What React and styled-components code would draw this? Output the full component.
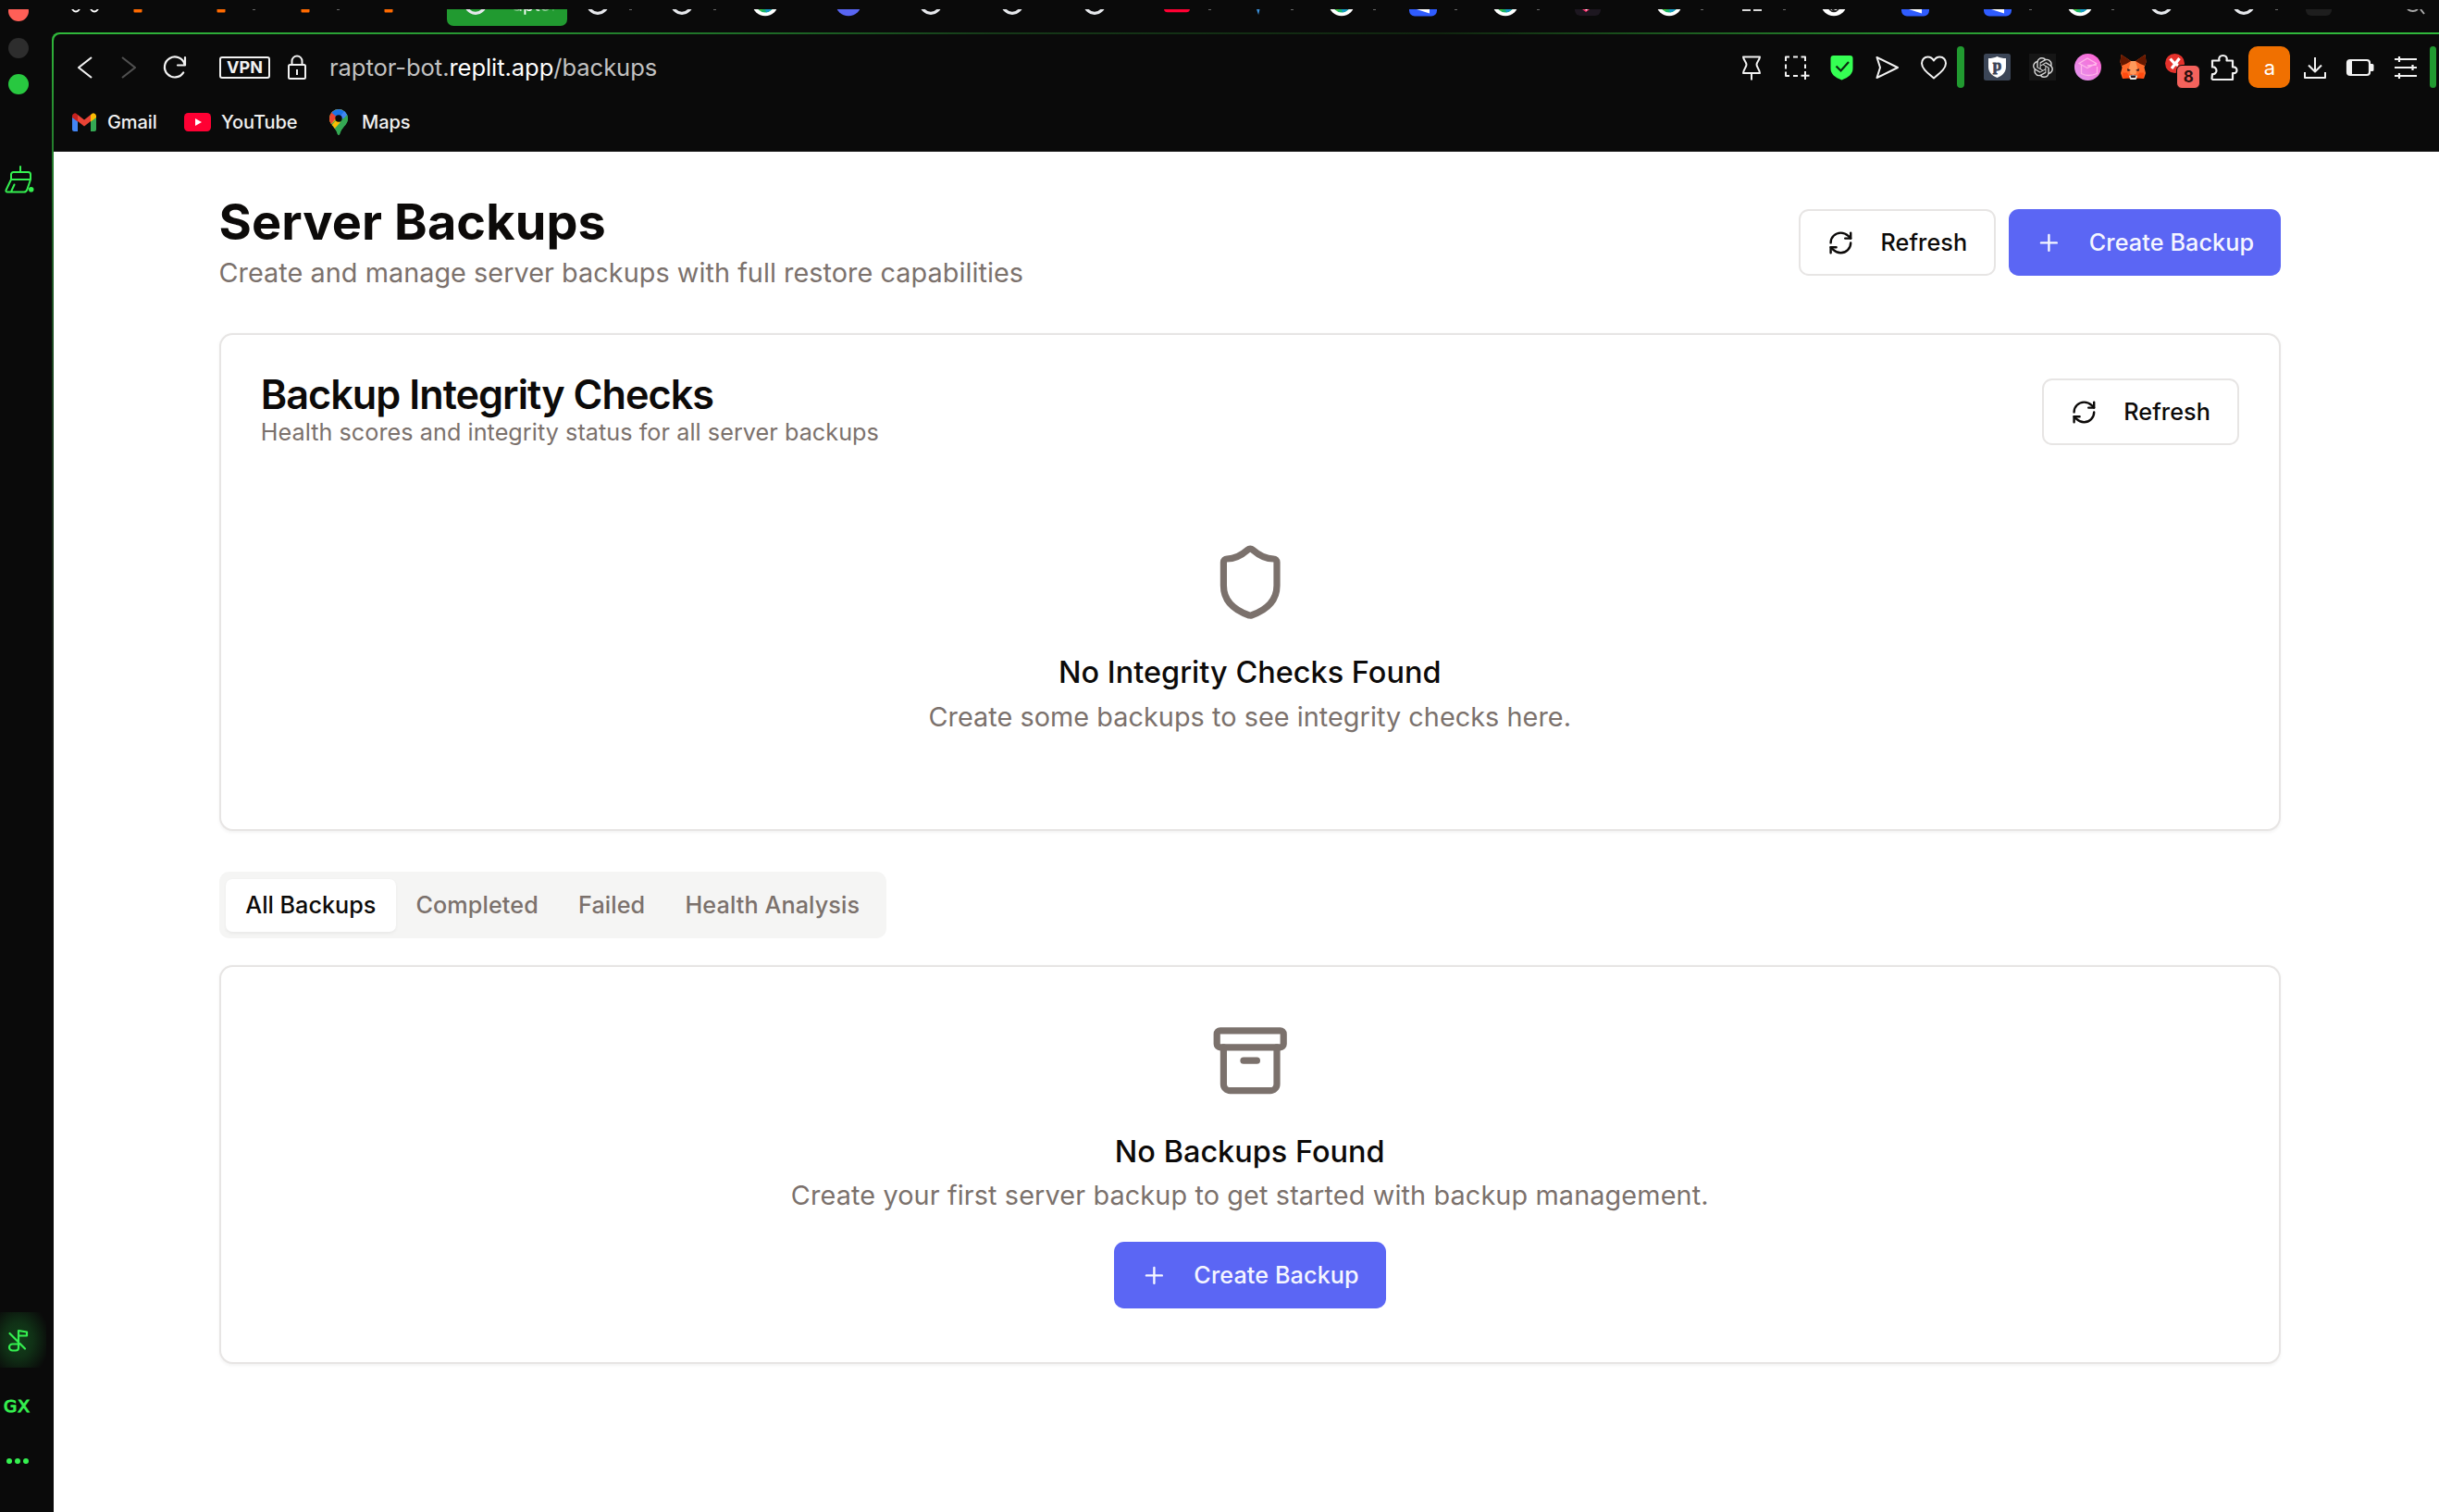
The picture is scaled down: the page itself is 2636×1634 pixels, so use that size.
import React from "react";
import styled, { createGlobalStyle, css } from "styled-components";
import { RefreshCw, Plus, Shield, Archive } from "lucide-react";
import { SiOpenai } from "react-icons/si";

const GlobalStyle = createGlobalStyle`
  *, *::before, *::after { box-sizing: border-box; }
  html, body { margin: 0; padding: 0; background: #0a0a0a; }
  body { font-family: Inter, "Liberation Sans", sans-serif; overflow: hidden; }
  svg { display: block; flex: none; }
  h1, h2, h3, p { margin: 0; }
  button { font: inherit; border: 0; margin: 0; cursor: pointer; }
`;

const Window = styled.div`
  display: flex;
  width: 2636px;
  height: 1634px;
  background: #0a0a0a;
  overflow: hidden;
`;

/* ---------- left rail ---------- */
const Rail = styled.aside`
  width: 56px;
  flex: none;
  display: flex;
  flex-direction: column;
  padding-top: 10px;
`;
const TrafficLights = styled.div`
  display: flex;
  flex-direction: column;
  gap: 17.6px;
  height: 93px;
  padding-left: 9px;
  overflow: hidden;
`;
const Light = styled.span`
  width: 22px;
  height: 22px;
  flex: none;
  border-radius: 50%;
  background: ${(p) => p.$color};
  margin-top: ${(p) => (p.$first ? "-9px" : "0")};
`;
const RailTop = styled.div`
  padding: 76px 0 0 5px;
  flex: 1;
`;
const RailTile = styled.div`
  width: 50px;
  height: 60px;
  padding: 18px 0 0 8px;
  background: radial-gradient(ellipse 34px 42px at 20px 30px, #12401a 0%, #103116 45%, #0a0a0a 100%);
`;
const GxLabel = styled.div`
  margin-top: 31px;
  padding-left: 4px;
  height: 21px;
  font: 400 18.5px/21px "DejaVu Sans", sans-serif;
  letter-spacing: 1px;
  -webkit-text-stroke: 1.1px #35f050;
  color: #35f050;
`;
const Dots = styled.div`
  display: flex;
  gap: 3px;
  padding: 46px 0 52px 7px;
  span {
    width: 6px;
    height: 6px;
    border-radius: 50%;
    background: #35f050;
  }
`;

/* ---------- browser frame ---------- */
const Main = styled.div`
  flex: 1;
  display: flex;
  flex-direction: column;
  min-width: 0;
`;
const TabStrip = styled.div`
  display: flex;
  height: 35px;
  padding: 10px 0 0 21px;
  flex: none;
`;
const TabCell = styled.div`
  width: ${(p) => p.$w}px;
  flex: none;
  display: flex;
  align-items: flex-start;
`;
const ActiveTab = styled.div`
  width: 130px;
  height: 18px;
  margin-right: 18px;
  padding-left: 16px;
  flex: none;
  display: flex;
  gap: 12px;
  overflow: hidden;
  border-radius: 0 0 7px 7px;
  background: #219a30;
`;
const TabText = styled.span`
  font-size: 20px;
  line-height: 20px;
  margin-top: -15px;
  height: 21px;
  color: #fff;
  -webkit-mask-image: linear-gradient(90deg, transparent 12px, #000 26px, #000 55%, transparent);
`;
const Frame = styled.div`
  flex: 1;
  display: flex;
  flex-direction: column;
  border-radius: 8px 0 0 0;
  padding: 2px 0 0 2px;
  background:
    linear-gradient(90deg, #30b93b 0, #289a33 420px, #1d6926 780px, #153818 1020px, #10240f 1500px, rgba(10, 10, 10, 0) 2200px) top / 100% 2px no-repeat,
    linear-gradient(180deg, #30b93b 0, #26872f 100px, #1c5c24 220px, #1a3a1e 420px, #161a16 700px, #0a0a0a 1000px);
`;
const Chrome = styled.div`
  height: 127px;
  flex: none;
  background: #0a0a0a;
  border-radius: 7px 0 0 0;
  border-bottom: 1px solid #1c1c1c;
`;
const AddressRow = styled.div`
  height: 71px;
  display: flex;
  align-items: center;
`;
const NavButtons = styled.div`
  display: flex;
  align-items: center;
  gap: 23px;
  padding-left: 21px;
`;
const Vpn = styled.span`
  width: 55px;
  height: 24px;
  margin: 0 18px 0 34px;
  display: flex;
  align-items: center;
  justify-content: center;
  border: 2px solid #f2f2f2;
  border-radius: 3px;
  color: #f2f2f2;
  font-size: 18px;
  font-weight: 700;
`;
const Url = styled.span`
  margin-left: 24px;
  font-size: 25.6px;
  letter-spacing: -0.08px;
  line-height: 32px;
  padding-top: 1px;
  color: #c2c2c2;
  white-space: nowrap;
  b { font-weight: 400; color: #fff; }
`;
const ToolIcons = styled.div`
  display: flex;
  align-items: center;
  margin-left: ${(p) => p.$ml || "0"};
  margin-right: ${(p) => p.$mr || "0"};
`;
const Slot = styled.span`
  width: 49.05px;
  height: 45px;
  display: flex;
  align-items: center;
  justify-content: center;
`;
const GreenBar = styled.span`
  width: 7.5px;
  height: 45px;
  border-radius: 4px;
  background: #219a30;
  flex: none;
  margin-right: ${(p) => (p.$edge ? "3px" : "0")};
`;
const Avatar = styled.span`
  width: 45px;
  height: 45px;
  border-radius: 10px;
  background: #f07000;
  color: #fff;
  display: flex;
  align-items: center;
  justify-content: center;
  font-size: 22px;
`;
const BadgeHost = styled.span`
  position: relative;
  width: 29px;
  height: 29px;
`;
const Badge = styled.span`
  position: absolute;
  left: 12px;
  top: 12px;
  width: 26px;
  height: 26px;
  border: 0.5px solid #0a0a0a;
  border-radius: 6px;
  background: #f4625c;
  color: #2a0f0e;
  font-size: 17px;
  font-weight: 700;
  line-height: 25px;
  text-align: center;
`;
const Bookmarks = styled.div`
  display: flex;
  align-items: center;
  height: 47px;
  padding-left: 20px;
`;
const Bookmark = styled.span`
  display: flex;
  align-items: center;
  gap: ${(p) => p.$gap}px;
  width: ${(p) => p.$w}px;
  font-size: 20px;
  letter-spacing: -0.1px;
  line-height: 26px;
  font-weight: 500;
  color: #f0f0f0;
`;

/* ---------- page ---------- */
const Page = styled.main`
  flex: 1;
  background: #fff;
  padding: 44px 171px 0 178.5px;
  color: #0c0a09;
`;
const PageHeader = styled.header`
  display: flex;
  justify-content: space-between;
  align-items: center;
  margin-bottom: 43.8px;
`;
const Title = styled.h1`
  font-size: 54px;
  line-height: 64.8px;
  font-weight: 700;
  letter-spacing: 0.12px;
`;
const Muted = styled.p`
  font-size: ${(p) => (p.$small ? "25.2px" : "28.8px")};
  line-height: ${(p) => (p.$small ? "36px" : "43.2px")};
  letter-spacing: ${(p) => p.$ls || "0.05px"};
  color: #7b716c;
  white-space: nowrap;
`;
const Actions = styled.div`
  display: flex;
  gap: 14.4px;
`;
const Button = styled.button`
  display: inline-flex;
  align-items: center;
  gap: 28.8px;
  height: 72px;
  padding: 0 28.8px;
  border-radius: 10.8px;
  font-size: 25.2px;
  letter-spacing: 0.1px;
  font-weight: 500;
  white-space: nowrap;
  ${(p) =>
    p.$primary
      ? css`
          background: #5b66f4;
          color: #f5f6ff;
        `
      : css`
          background: #fff;
          color: #0c0a09;
          border: 2px solid #e7e5e4;
        `}
`;
const Card = styled.section`
  border: 2px solid #e7e5e4;
  border-radius: 14.4px;
  background: #fff;
  box-shadow: 0 1.8px 3.6px rgba(0, 0, 0, 0.05);
  padding: ${(p) => p.$pad};
  margin-top: ${(p) => p.$mt || 0};
  height: ${(p) => p.$h};
`;
const CardHeader = styled.div`
  display: flex;
  justify-content: space-between;
  align-items: center;
`;
const CardTitle = styled.h2`
  font-size: 43.2px;
  line-height: 43.2px;
  font-weight: 600;
  letter-spacing: -0.97px;
`;
const Empty = styled.div`
  display: flex;
  flex-direction: column;
  align-items: center;
  padding-top: ${(p) => p.$top};
  > svg { margin-bottom: 29.8px; color: #7b716c; }
  > button { margin-top: 28.8px; }
`;
const EmptyTitle = styled.h3`
  font-size: 32.4px;
  line-height: 50.4px;
  font-weight: 500;
  letter-spacing: 0.04px;
`;
const TabList = styled.div`
  display: inline-flex;
  height: 72px;
  padding: 7.2px;
  margin-top: 44px;
  border-radius: 10.8px;
  background: #f5f5f4;
  vertical-align: top;
`;
const TabTrigger = styled.button`
  padding: 0 21.6px;
  height: 57.6px;
  border-radius: 7.2px;
  font-size: 25.2px;
  font-weight: 500;
  letter-spacing: ${(p) => (p.$active ? "0" : "0.1px")};
  white-space: nowrap;
  background: ${(p) => (p.$active ? "#fff" : "transparent")};
  color: ${(p) => (p.$active ? "#0c0a09" : "#7b716c")};
  box-shadow: ${(p) => (p.$active ? "0 1.8px 3.6px rgba(0,0,0,.05)" : "none")};
`;

/* ---------- favicons (only their lower edge is visible) ---------- */
const Favicon = ({ kind }) => {
  const art = {
    hooks: (
      <g fill="none" stroke="#fff" strokeWidth="2">
        <path d="M0 0q4 5 8 0M20 0q4 5 8 0" />
      </g>
    ),
    orange: <rect x="9.5" y="-4" width="9" height="7.5" rx="1" fill="#ff6a00" />,
    ring: <circle cx="14" cy="-6.3" r="10.6" fill="none" stroke="#e6e8ec" strokeWidth="3.2" />,
    globe: (
      <g>
        <circle cx="14" cy="-6.7" r="14" fill="#fff" />
        <circle cx="14" cy="-6.7" r="10.2" fill="#19b56a" />
        <path d="M14 0h7l-2 2-4 1.4z" fill="#1597c9" />
        <path d="M7 0h4l-1 2z" fill="#4cc22e" />
      </g>
    ),
    indigo: <circle cx="14" cy="-6.7" r="14" fill="#5865f2" />,
    red: <rect x="0" y="-10" width="28" height="13.3" rx="4" fill="#ff0033" />,
    sliver: <path d="M11 0h3.5l-1.4 6z" fill="#3b8fd8" />,
    blue: (
      <g>
        <rect x="-1" y="-20" width="30" height="27.5" rx="6" fill="#2f5cff" />
        <path d="M7 0h14v4.5z" fill="#fff" />
      </g>
    ),
    pink: (
      <g>
        <rect x="0" y="-20" width="28" height="27" rx="6" fill="#1d1720" />
        <path d="M8 0h8l-4 3z" fill="#ff2d6b" />
        <path d="M11 0h3l-1.5 1.5z" fill="#fff" />
      </g>
    ),
    dashes: <path d="M4 1h9M16 1h9" stroke="#d8d8d8" strokeWidth="2" />,
    disc: (
      <g>
        <circle cx="14" cy="-6.7" r="14" fill="#fff" />
        <path d="M9 0q5 5 10 0M12 0l4 2" fill="none" stroke="#222" strokeWidth="1.6" />
      </g>
    ),
    dark: <rect x="0" y="-20" width="28" height="27" rx="6" fill="#1e1e1e" />,
    search: <path d="M6 0q6 4 11 0M20 0l4 5" fill="none" stroke="#a8a8a8" strokeWidth="2" />,
  };
  return (
    <svg width="30" height="9" viewBox="-1 0 30 9">
      {art[kind]}
    </svg>
  );
};

const TabDot = styled.span`
  width: 3px;
  height: 1px;
  margin-left: 19px;
  background: #6a6a6a;
`;

/* [icon, cell width, shows the first pixels of its label] */
const leftTabs = [
  ["hooks", 56.5],
  ["orange", 90.5],
  ["orange", 90.5, true],
  ["orange", 90.5, true],
  ["orange", 78],
];
const rightTabs = [
  ["ring", 90.5, true], ["ring", 90.5, true], ["globe", 90], ["indigo", 88.5], ["ring", 88.9],
  ["ring", 88.9], ["ring", 88.9], ["red", 88.7, true], ["sliver", 88.7, true], ["globe", 88.7, true],
  ["blue", 88.7, true], ["globe", 88.7, true], ["pink", 88.7], ["globe", 88.7, true], ["dashes", 88.7, true],
  ["disc", 88.7], ["blue", 88.7], ["blue", 88.7, true], ["globe", 88.7, true], ["ring", 88.7],
  ["ring", 81, true], ["dark", 104], ["search", 30],
];

const line = { fill: "none", stroke: "#f2f2f2", strokeWidth: 2, strokeLinejoin: "round" };

const Back = () => (
  <svg width="25" height="28" viewBox="0 0 25 28" {...line} strokeWidth="2.2"><path d="M20 3 6 14l14 11" /></svg>
);
const Forward = () => (
  <svg width="25" height="28" viewBox="0 0 25 28" {...line} stroke="#505050" strokeWidth="2.2"><path d="M5 3l14 11L5 25" /></svg>
);
const Reload = () => (
  <svg width="28" height="28" viewBox="0 0 28 28" {...line} strokeWidth="2.2" strokeLinecap="round">
    <path d="M23.2 19.4A11 11 0 1 1 24.5 10.500M25 3v8.500h-8" />
  </svg>
);
const Lock = () => (
  <svg width="22" height="28" viewBox="0 0 22 28" {...line}>
    <rect x="2" y="11" width="18" height="15" rx="1.500" /><path d="M5.500 11V7a5.500 5.500 0 0 1 11 0v4M11 16v6" />
  </svg>
);
const Pin = () => (
  <svg width="28" height="28" viewBox="0 0 28 28" {...line}>
    <path d="M5 2.500h18c-.2 3-3.500 5.500-3.500 8.300S22.800 16 23 20H5c.2-4 3.500-6.400 3.500-9.200S5.200 5.500 5 2.500zM14 20v7.500" />
  </svg>
);
const Capture = () => (
  <svg width="28" height="28" viewBox="0 0 28 28" {...line}>
    <path d="M2 7V2.500h4M10 2.500h5M18.500 2.500H23V7M2 10.500v5M2 18.500V23h4M10 23h5M23 10.500V15M23 18v9M18.500 22.700h9" />
  </svg>
);
const GreenShield = () => (
  <svg width="28" height="28" viewBox="0 0 28 28">
    <path d="M4.500 1h18a3 3 0 0 1 3 3v11c0 6-4.500 9.500-12 12.500C6 24.500 1.500 21 1.500 15V4a3 3 0 0 1 3-3z" fill="#35ff53" />
    <path d="M7.500 12.500l5 5 8.500-9.500" fill="none" stroke="#0a2a10" strokeWidth="2.200" />
  </svg>
);
const Send = () => (
  <svg width="28" height="28" viewBox="0 0 28 28" {...line}><path d="M2.500 3 25 14 2.500 25 6 14z" /></svg>
);
const Heart = () => (
  <svg width="30" height="28" viewBox="0 0 30 28" {...line}>
    <path d="M15 25.500C8 19.500 2 15 2 9.500 2 5.500 4.700 2.500 8.500 2.500c3 0 5 1.500 6.500 4 1.500-2.500 3.500-4 6.500-4 3.800 0 6.500 3 6.500 7 0 5.500-6 10-13 16z" />
  </svg>
);
const PIcon = () => (
  <svg width="29" height="29" viewBox="0 0 29 29">
    <rect width="29" height="29" rx="2.500" fill="#3b4556" />
    <path d="M14.500 3c3 1.600 6 2 9.500 2v9c0 6-3.500 9.500-9.500 12C8.500 23.500 5 20 5 14V5c3.500 0 6.500-.4 9.500-2z" fill="#fff" />
    <text x="14.500" y="17.500" textAnchor="middle" fontFamily="Liberation Serif, serif" fontWeight="700" fontSize="17" fill="#3b4556" stroke="#3b4556" strokeWidth=".8">p</text>
  </svg>
);
const GptTile = styled.span`
  width: 29px;
  height: 29px;
  display: flex;
  align-items: center;
  justify-content: center;
  background: #161616;
  color: #d4d4d4;
`;
const Grad = () => (
  <svg width="29" height="29" viewBox="0 0 29 29">
    <defs><linearGradient id="gradFill" x1="1" y1="0" x2="0" y2="1"><stop offset="0" stopColor="#ff5fd0" /><stop offset="1" stopColor="#e09af0" /></linearGradient></defs>
    <circle cx="14.500" cy="14.500" r="14.500" fill="url(#gradFill)" />
    <path d="M5 10.500 14 5l9.500 5.500L14 15.500zM14 13l10-1M7.500 12.500v9q7 4 17 0v-7.500" fill="none" stroke="#ffb5ea" strokeWidth="1.300" />
  </svg>
);
const Fox = () => (
  <svg width="29" height="29" viewBox="0 0 29 29">
    <path d="M1.500 1 12 8h5L27.500 1l1 8-2 6 1.500 6-2 6-5.500-1.500-3 2h-6l-3-2L3 27l-2-6 1.500-6-2-6z" fill="#ff6a2a" />
    <path d="M1.500 1 12 8l-5 3-5 2-1.500-4zM27.500 1 17 8l5 3 5 2 1.500-4z" fill="#641800" />
    <path d="M12 8h5l2 7-1.500 7h-6L10 15z" fill="#ff9a5c" />
    <path d="M3 20.500h5l3 6-7.500.5zM26 20.500h-5l-3 6 7.500.5z" fill="#ff4a10" />
    <path d="M8 16l4 2-3.500 1zM21 16l-4 2 3.500 1z" fill="#2a1a20" />
    <path d="M10 24l4.500-1.500L19 24l-1.500 4h-6z" fill="#e8e4e0" />
    <path d="M11.500 23.500h6l-.8 2.500h-4.400z" fill="#2a1a20" />
  </svg>
);
const RedX = () => (
  <svg width="29" height="29" viewBox="0 0 29 29">
    <circle cx="10.500" cy="10.500" r="10.500" fill="#e5322c" />
    <path d="M5.500 5.500l4.500 5M15.500 5l-8.500 11M10 10.500l4 2" stroke="#fff" strokeWidth="3.200" fill="none" />
  </svg>
);
const Puzzle = () => (
  <svg width="31" height="30" viewBox="0 0 31 30" {...line} strokeWidth="2.200">
    <path d="M3 7.500h7.500C9.500 4 11.500 2 14.500 2s5 2 4 5.500H25v7c2.500-.5 4.500 1 4.500 3.500S27.500 21.500 25 21v7H3.500L2.500 27l.5-5c2.500.5 4.500-1.500 4.500-3.800S5.500 14 3 14.500z" />
  </svg>
);
const Download = () => (
  <svg width="28" height="28" viewBox="0 0 28 28" {...line}><path d="M14 3v15M7 11.500l7 7 7-7M3 19v6h22v-6" /></svg>
);
const Battery = () => (
  <svg width="31" height="20" viewBox="0 0 31 20">
    <rect x="2" y="2" width="24" height="16" rx="3" fill="none" stroke="#f2f2f2" strokeWidth="2.200" />
    <path d="M2 3h5v14H2zM27 6h2a1.500 1.500 0 0 1 1.500 1.500v5A1.500 1.500 0 0 1 29 14h-2z" fill="#f2f2f2" />
  </svg>
);
const Sliders = () => (
  <svg width="26" height="26" viewBox="0 0 26 26" {...line} strokeWidth="2.200">
    <path d="M1 4h24M1 13h24M1 22h24M6 1v6M20.500 10v6M6 19v6" />
  </svg>
);
const Broom = () => (
  <svg width="33" height="30" viewBox="0 0 33 30" fill="none" stroke="#35f050" strokeWidth="2" strokeLinejoin="round" strokeLinecap="round">
    <path d="M17 1v6M7 15V9.500A2.500 2.500 0 0 1 9.500 7h16A2.500 2.500 0 0 1 28 9.500V15zM7 15L1.500 26.500Q1 28.500 3 28.500h18q2.200 0 3.300-2.500L28 15M10.500 20.500L7.500 27" />
    <circle cx="28.700" cy="25.700" r="1.800" fill="#35f050" />
  </svg>
);
const MusicOff = () => (
  <svg width="24" height="26" viewBox="0 0 24 26" fill="none" stroke="#35f050" strokeWidth="2.200" strokeLinejoin="round" strokeLinecap="round">
    <path d="M12 19.500V2l9 1.500v4H12M12 16.500H5.500a3.500 3.500 0 0 0 0 7H9a3 3 0 0 0 3-3zM2.500 5l16.500 16.500" />
  </svg>
);
const Gmail = () => (
  <svg width="26" height="20" viewBox="0 0 26 20">
    <path d="M0 3v15a2 2 0 0 0 2 2h4V7z" fill="#4285f4" />
    <path d="M26 3v15a2 2 0 0 1-2 2h-4V7z" fill="#34a853" />
    <path d="M6 2l7 5.500L20 2v7l-7 5.500L6 9z" fill="#ea4335" />
    <path d="M6 2 4.800 1A3 3 0 0 0 0 3.200V5l6 4.500z" fill="#c5221f" />
    <path d="M20 2l1.200-1A3 3 0 0 1 26 3.200V5l-6 4.500z" fill="#fbbc04" />
  </svg>
);
const YouTube = () => (
  <svg width="29" height="20" viewBox="0 0 29 20">
    <rect width="29" height="20" rx="4.500" fill="#ff0033" /><path d="M12 6l7 4-7 4z" fill="#fff" />
  </svg>
);
const Maps = () => (
  <svg width="20" height="28" viewBox="0 0 20 28">
    <defs><clipPath id="pinClip"><path d="M10 0a10 10 0 0 1 10 10c0 6-5 8.500-7.500 13.500-1 2-1.300 4.500-2.500 4.500s-1.500-2.500-2.500-4.500C5 18.500 0 16 0 10A10 10 0 0 1 10 0z" /></clipPath></defs>
    <g clipPath="url(#pinClip)">
      <rect width="20" height="28" fill="#34a853" />
      <path d="M0 18 19 0H0z" fill="#fbbc04" />
      <path d="M-1 21l9-10 5 4-9 9z" fill="#fbbc04" />
      <path d="M-3 14V0h7l5 7-7 9z" fill="#ea4335" />
      <path d="M2 3.500 10 10 19 0H2z" fill="#1a73e8" />
      <path d="M8 12 18 0h4v8z" fill="#4285f4" />
      <path d="M20 5 3 24l10 6 9-12z" fill="#34a853" />
    </g>
    <circle cx="10" cy="10" r="3.700" fill="#0a0a0a" />
  </svg>
);

const RefreshButton = () => (
  <Button><RefreshCw size={28.8} />Refresh</Button>
);
const CreateButton = () => (
  <Button $primary><Plus size={28.8} />Create Backup</Button>
);
const Tabs = ({ items }) =>
  items.map(([kind, w, dot], i) => (
    <TabCell key={i} $w={w}><Favicon kind={kind} />{dot && <TabDot />}</TabCell>
  ));

export default function App() {
  return (
    <Window>
      <GlobalStyle />
      <Rail>
        <TrafficLights>
          <Light $color="#ff5f57" $first />
          <Light $color="#2d2d2d" />
          <Light $color="#28c840" />
        </TrafficLights>
        <RailTop><Broom /></RailTop>
        <RailTile><MusicOff /></RailTile>
        <GxLabel>GX</GxLabel>
        <Dots><span /><span /><span /></Dots>
      </Rail>

      <Main>
        <TabStrip>
          <Tabs items={leftTabs} />
          <ActiveTab><Favicon kind="ring" /><TabText>Raptor</TabText></ActiveTab>
          <Tabs items={rightTabs} />
        </TabStrip>

        <Frame>
          <Chrome>
            <AddressRow>
              <NavButtons><Back /><Forward /><Reload /></NavButtons>
              <Vpn>VPN</Vpn>
              <Lock />
              <Url>raptor-bot.<b>replit.app</b>/backups</Url>
              <ToolIcons $ml="auto" $mr="1px">
                <Slot><Pin /></Slot>
                <Slot><Capture /></Slot>
                <Slot><GreenShield /></Slot>
                <Slot><Send /></Slot>
                <Slot><Heart /></Slot>
              </ToolIcons>
              <GreenBar />
              <ToolIcons $ml="11.5px" $mr="1px">
                <Slot><PIcon /></Slot>
                <Slot><GptTile><SiOpenai size={22} /></GptTile></Slot>
                <Slot><Grad /></Slot>
                <Slot><Fox /></Slot>
                <Slot><BadgeHost><RedX /><Badge>8</Badge></BadgeHost></Slot>
                <Slot><Puzzle /></Slot>
                <Slot><Avatar>a</Avatar></Slot>
                <Slot><Download /></Slot>
                <Slot><Battery /></Slot>
                <Slot><Sliders /></Slot>
              </ToolIcons>
              <GreenBar $edge />
            </AddressRow>
            <Bookmarks>
              <Bookmark $w={121} $gap={12}><Gmail />Gmail</Bookmark>
              <Bookmark $w={157} $gap={11}><YouTube />YouTube</Bookmark>
              <Bookmark $w={100} $gap={15}><Maps />Maps</Bookmark>
            </Bookmarks>
          </Chrome>

          <Page>
            <PageHeader>
              <div>
                <Title>Server Backups</Title>
                <Muted>Create and manage server backups with full restore capabilities</Muted>
              </div>
              <Actions><RefreshButton /><CreateButton /></Actions>
            </PageHeader>

            <Card $pad="43.6px 43.2px" $h="538.7px">
              <CardHeader>
                <div>
                  <CardTitle>Backup Integrity Checks</CardTitle>
                  <Muted $small>Health scores and integrity status for all server backups</Muted>
                </div>
                <RefreshButton />
              </CardHeader>
              <Empty $top="101.5px">
                <Shield size={86.4} />
                <EmptyTitle>No Integrity Checks Found</EmptyTitle>
                <Muted>Create some backups to see integrity checks here.</Muted>
              </Empty>
            </Card>

            <TabList>
              <TabTrigger $active>All Backups</TabTrigger>
              <TabTrigger>Completed</TabTrigger>
              <TabTrigger>Failed</TabTrigger>
              <TabTrigger>Health Analysis</TabTrigger>
            </TabList>

            <Card $pad="58px 57.6px" $mt="29px" $h="430.7px">
              <Empty $top="0">
                <Archive size={86.4} />
                <EmptyTitle>No Backups Found</EmptyTitle>
                <Muted $ls="0.13px">Create your first server backup to get started with backup management.</Muted>
                <CreateButton />
              </Empty>
            </Card>
          </Page>
        </Frame>
      </Main>
    </Window>
  );
}
